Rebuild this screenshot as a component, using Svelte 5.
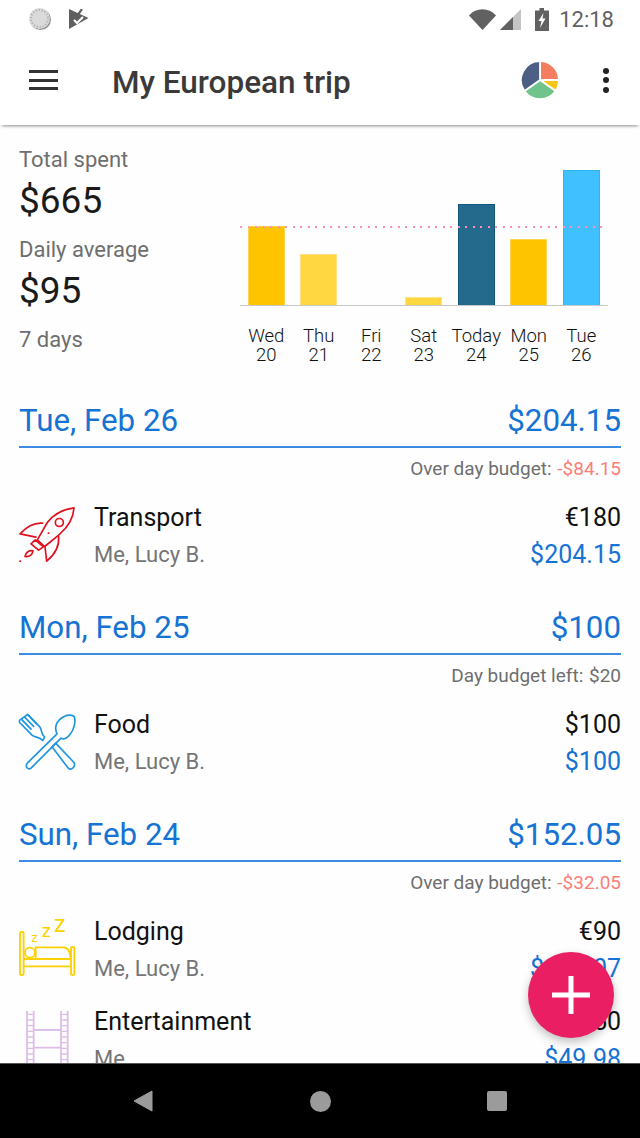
<script lang="ts">
  const bars = [
    { day: "Wed", date: 20, height: 79, tone: "amber" },
    { day: "Thu", date: 21, height: 51, tone: "yellow" },
    { day: "Fri", date: 22, height: 0, tone: "yellow" },
    { day: "Sat", date: 23, height: 8, tone: "yellow" },
    { day: "Today", date: 24, height: 101, tone: "navy" },
    { day: "Mon", date: 25, height: 66, tone: "amber" },
    { day: "Tue", date: 26, height: 135, tone: "sky" },
  ];

  const days = [
    {
      label: "Tue, Feb 26",
      total: "$204.15",
      note: "Over day budget:",
      noteValue: "-$84.15",
      over: true,
      items: [{ icon: "rocket", name: "Transport", who: "Me, Lucy B.", paid: "€180", home: "$204.15" }],
    },
    {
      label: "Mon, Feb 25",
      total: "$100",
      note: "Day budget left:",
      noteValue: "$20",
      over: false,
      items: [{ icon: "food", name: "Food", who: "Me, Lucy B.", paid: "$100", home: "$100" }],
    },
    {
      label: "Sun, Feb 24",
      total: "$152.05",
      note: "Over day budget:",
      noteValue: "-$32.05",
      over: true,
      items: [
        { icon: "bed", name: "Lodging", who: "Me, Lucy B.", paid: "€90", home: "$102.07" },
        { icon: "film", name: "Entertainment", who: "Me", paid: "€50", home: "$49.98" },
      ],
    },
  ];
</script>

{#snippet categoryIcon(kind: string)}
  {#if kind === "rocket"}
    <svg class="cat" viewBox="57 49.5 171 171" fill="none" stroke="#e0101e" stroke-width="5" stroke-linejoin="round" stroke-linecap="round" aria-hidden="true">
      <path d="M222 52C190 56 160 72 142 96L112 148L134 168L176 134C202 112 220 84 222 52Z" />
      <path d="M128 98C105 96 80 108 60 130L108 140" />
      <path d="M176 138C178 165 165 192 140 212L135 168" />
      <path d="M93 160L106 148L130 169L116 179Z" />
      <path d="M75 198C77 186 88 178 99 181C97 192 88 199 75 198Z" />
      <circle cx="178" cy="96" r="12" />
      <path d="M60 212h1M145 128h1" />
    </svg>
  {:else if kind === "food"}
    <svg class="cat" viewBox="57 40.5 171 171" fill="none" stroke="#1f95e0" stroke-width="5" stroke-linejoin="round" stroke-linecap="round" aria-hidden="true">
      <path d="M222 47C205 38 178 50 169 72C165 84 167 92 171 100L82 188C74 198 84 210 94 202L183 113C192 118 202 112 210 102C224 86 228 58 222 47Z" />
      <path d="M83 42L110 70M74 50L101 78M66 58L93 86" />
      <path d="M83 42L120 80C126 88 122 100 134 110L128 120C118 108 106 112 96 104L59 66C57 62 57 60 60 58Z" />
      <path d="M156 139L167 128L222 186C228 198 214 212 204 202Z" />
    </svg>
  {:else if kind === "bed"}
    <svg class="cat bed" viewBox="57 45 171 174" fill="none" stroke="#ffd000" stroke-width="5.5" stroke-linejoin="round" aria-hidden="true">
      <rect x="60" y="81" width="11" height="129" rx="4" />
      <rect x="213" y="126" width="10" height="84" rx="4" />
      <circle cx="90" cy="143" r="15" />
      <path d="M107 127H190C204 127 211 140 212 162H107Z" />
      <path d="M72 162H106M72 184H212" />
      <text x="94" y="110" class="zzz small">z</text>
      <text x="125" y="97" class="zzz mid">z</text>
      <text x="162" y="82" class="zzz big">z</text>
    </svg>
  {:else}
    <svg class="cat" viewBox="57 30 171 171" fill="none" stroke="#dcbfe8" stroke-width="5.5" aria-hidden="true">
      <path d="M81 30V201M101 30V201M183 30V201M203 30V201M101 87H183M101 140H183M101 193H183" />
      <path d="M81 40H101M81 57H101M81 74H101M81 91H101M81 108H101M81 125H101M81 142H101M81 159H101M81 176H101M183 40H203M183 57H203M183 74H203M183 91H203M183 108H203M183 125H203M183 142H203M183 159H203M183 176H203" stroke-width="4" />
    </svg>
  {/if}
{/snippet}

<div class="screen">
  <div class="status">
    <div class="status-left">
      <svg width="24" height="24" viewBox="0 0 24 24" aria-hidden="true">
        <circle cx="12.5" cy="12.5" r="10.5" fill="#8c8c8c" />
        <circle cx="11.5" cy="11.5" r="10.5" fill="#dadada" />
        <circle cx="11.5" cy="11.5" r="8.5" fill="none" stroke="#a8a8a8" stroke-width="2" stroke-dasharray="1 2" />
      </svg>
      <svg width="20" height="21" viewBox="0 0 20 21" aria-hidden="true">
        <path d="M0 0L19.5 9L0 20Z" fill="#5f5f5f" />
        <path d="M5 11L8 14L14 8" fill="none" stroke="#fff" stroke-width="2.2" />
        <path d="M5 5L8 7L13 0" fill="none" stroke="#5f5f5f" stroke-width="2.2" />
      </svg>
    </div>
    <div class="status-right">
      <svg width="27" height="21" viewBox="0 0 27 21" aria-hidden="true">
        <path d="M0 6.5C7 -2 20 -2 27 6.5L13.5 21Z" fill="#616161" />
      </svg>
      <svg class="signal" width="21" height="21" viewBox="0 0 21 21" aria-hidden="true">
        <path d="M0 21L21 0V21Z" fill="#c4c4c4" />
        <path d="M0 21L13 8V21Z" fill="#616161" />
      </svg>
      <svg class="battery" width="14" height="23" viewBox="0 0 14 23" aria-hidden="true">
        <path d="M4.5 0H9V2.5H14V23H0V2.5H4.5Z" fill="#616161" />
        <path d="M8.5 5L3.5 13H6.5L5 20L10.5 10.5H7.5Z" fill="#fff" />
      </svg>
      <span class="time">12:18</span>
    </div>
  </div>

  <header class="appbar">
    <button class="menu" aria-label="Menu"><span></span><span></span><span></span></button>
    <h1>My European trip</h1>
    <svg class="pie" width="40" height="40" viewBox="0 0 40 40" stroke="#fff" stroke-width="1.8" aria-hidden="true">
      <path d="M20 20V1A19 19 0 0 1 39 20Z" fill="#f47d5f" />
      <path d="M20 20H39A19 19 0 0 1 35.6 30.9Z" fill="#f5c518" />
      <path d="M20 20L35.6 30.9A19 19 0 0 1 4.4 30.9Z" fill="#70c48b" />
      <path d="M20 20L4.4 30.9A19 19 0 0 1 20 1Z" fill="#4e5f86" />
    </svg>
    <button class="more" aria-label="More"><span></span><span></span><span></span></button>
  </header>

  <main class="content">
    <section class="summary">
      <div class="totals">
        <div class="stat-label">Total spent</div>
        <div class="stat-value">$665</div>
        <div class="stat-label">Daily average</div>
        <div class="stat-value">$95</div>
        <div class="stat-label">7 days</div>
      </div>
      <div class="chart">
        <div class="plot">
          <div class="budget-line"></div>
          {#each bars as bar}
            <div class="slot">
              {#if bar.height > 0}
                <div class="bar {bar.tone}" style="height: {bar.height}px"></div>
              {/if}
            </div>
          {/each}
        </div>
        <div class="labels">
          {#each bars as bar}
            <div class="label">{bar.day}<br />{bar.date}</div>
          {/each}
        </div>
      </div>
    </section>

    {#each days as day}
      <section class="day">
        <div class="day-head">
          <span>{day.label}</span>
          <span>{day.total}</span>
        </div>
        <div class="day-note">
          {day.note}
          <span class="note-value" class:over={day.over}>{day.noteValue}</span>
        </div>
        {#each day.items as item}
          <div class="item">
            {@render categoryIcon(item.icon)}
            <div class="item-text">
              <div class="item-name">{item.name}</div>
              <div class="item-who">{item.who}</div>
            </div>
            <div class="item-amounts">
              <div class="item-paid">{item.paid}</div>
              <div class="item-home">{item.home}</div>
            </div>
          </div>
        {/each}
      </section>
    {/each}

    <button class="fab" aria-label="Add expense">
      <svg width="40" height="40" viewBox="0 0 40 40" aria-hidden="true">
        <path d="M20 1V39M1 20H39" stroke="#fff" stroke-width="5" />
      </svg>
    </button>
  </main>

  <nav class="navbar">
    <svg width="20" height="22" viewBox="0 0 20 22" aria-hidden="true">
      <path d="M19 1V21L1 11Z" fill="#9b9b9b" stroke="#9b9b9b" stroke-width="1" stroke-linejoin="round" />
    </svg>
    <span class="home"></span>
    <span class="recents"></span>
  </nav>
</div>

<style>
  :global(body) {
    margin: 0;
    background: #fff;
  }
  .screen {
    display: flex;
    flex-direction: column;
    width: 640px;
    height: 1138px;
    overflow: hidden;
    font-family: Roboto, "Liberation Sans", sans-serif;
    background: #fefefe;
  }
  .status {
    display: flex;
    justify-content: space-between;
    align-items: center;
    flex: 0 0 38px;
    padding: 0 26px 0 28px;
    background: #fff;
  }
  .status-left,
  .status-right {
    display: flex;
    align-items: center;
  }
  .status-left {
    gap: 17px;
  }
  .signal {
    margin-left: 4px;
  }
  .battery {
    margin-left: 14px;
  }
  .time {
    margin-left: 10.5px;
    font-size: 22px;
    color: #616161;
  }
  .appbar {
    position: relative;
    z-index: 2;
    display: flex;
    align-items: center;
    flex: 0 0 87px;
    box-sizing: border-box;
    padding: 0 0 3px 29px;
    background: #fff;
    box-shadow: 0 3px 3px -2px rgba(0, 0, 0, 0.45);
  }
  .appbar h1 {
    flex: 1;
    margin: 4px 0 0 54px;
    font-size: 31.5px;
    font-weight: 500;
    color: #3a3a3a;
  }
  button {
    padding: 0;
    border: 0;
    background: none;
  }
  .menu {
    display: flex;
    flex-direction: column;
    gap: 5.5px;
    width: 29px;
  }
  .menu span {
    display: block;
    height: 3px;
    background: #333;
  }
  .pie {
    margin-right: 43px;
  }
  .more {
    display: flex;
    flex-direction: column;
    gap: 3.5px;
    margin-right: 31px;
  }
  .more span {
    display: block;
    width: 6px;
    height: 6px;
    border-radius: 50%;
    background: #222;
  }
  .content {
    position: relative;
    flex: 1;
    min-height: 0;
    overflow: hidden;
    border-bottom: 1px solid #555;
  }
  .summary {
    display: flex;
    box-sizing: border-box;
    height: 270px;
    padding: 21px 0 0 19px;
  }
  .totals {
    flex: 0 0 221px;
  }
  .stat-label {
    font-size: 22px;
    line-height: 28px;
    color: #6e6e6e;
  }
  .stat-value {
    margin: 6px 0 14px;
    font-size: 37px;
    line-height: 42px;
    color: #1a1a1a;
  }
  .chart {
    width: 367.5px;
  }
  .plot {
    position: relative;
    display: flex;
    align-items: flex-end;
    height: 139px;
    margin-top: 20px;
    border-bottom: 1px solid #c8c8c8;
  }
  .budget-line {
    position: absolute;
    top: 60px;
    left: 0;
    right: 0;
    z-index: 1;
    height: 2px;
    background: repeating-linear-gradient(to right, #ff8fb8 0 2px, transparent 2px 7.5px);
  }
  .slot {
    display: flex;
    justify-content: center;
    flex: 1;
  }
  .bar {
    box-sizing: border-box;
    width: 37px;
    border: 1px solid;
    border-bottom: 0;
  }
  .amber {
    background: #ffc400;
    border-color: #ffd54f;
  }
  .yellow {
    background: #ffd740;
    border-color: #ffe082;
  }
  .navy {
    background: #236a8c;
    border-color: #12587e;
  }
  .sky {
    background: #40c0ff;
    border-color: #29b6f6;
  }
  .labels {
    display: flex;
    margin-top: 21px;
  }
  .label {
    flex: 1;
    font-size: 18.5px;
    line-height: 19px;
    font-weight: 300;
    text-align: center;
    color: #111;
  }
  .day {
    padding: 0 19px 22px;
  }
  .day-head {
    display: flex;
    justify-content: space-between;
    align-items: center;
    height: 51px;
    border-bottom: 2px solid #3d8ce4;
    font-size: 31.3px;
    color: #1573d3;
  }
  .day-note {
    height: 42px;
    padding-top: 10px;
    box-sizing: border-box;
    font-size: 19px;
    line-height: 22px;
    text-align: right;
    color: #6e6e6e;
  }
  .note-value {
    margin-left: 1px;
  }
  .over {
    color: #fb7f78;
  }
  .item {
    display: flex;
    align-items: center;
    height: 90px;
  }
  .cat {
    flex: 0 0 57px;
    width: 57px;
    height: 57px;
    overflow: visible;
  }
  .bed {
    height: 58px;
  }
  .zzz {
    fill: #ffd000;
    stroke: none;
    font-family: Roboto, sans-serif;
  }
  .zzz.small {
    font-size: 38px;
  }
  .zzz.mid {
    font-size: 55px;
  }
  .zzz.big {
    font-size: 70px;
  }
  .item-text {
    flex: 1;
    margin-left: 18px;
    padding-top: 2px;
  }
  .item-name,
  .item-paid {
    font-size: 25px;
    line-height: 28px;
    color: #111;
  }
  .item-who,
  .item-home {
    margin-top: 9px;
    font-size: 22px;
    line-height: 28px;
    color: #757575;
  }
  .item-amounts {
    padding-top: 2px;
    text-align: right;
  }
  .item-home {
    font-size: 25px;
    color: #1573d3;
  }
  .fab {
    position: absolute;
    right: 26px;
    bottom: 25px;
    z-index: 3;
    display: flex;
    align-items: center;
    justify-content: center;
    width: 86px;
    height: 86px;
    border-radius: 50%;
    background: #e91e63;
    box-shadow: 0 4px 10px rgba(0, 0, 0, 0.25);
  }
  .navbar {
    display: flex;
    align-items: center;
    flex: 0 0 74px;
    background: #000;
  }
  .navbar svg {
    margin-left: 133px;
  }
  .home {
    width: 21px;
    height: 21px;
    margin-left: 156.5px;
    border-radius: 50%;
    background: #9b9b9b;
  }
  .recents {
    width: 20px;
    height: 20px;
    margin-left: 156px;
    border-radius: 2px;
    background: #9b9b9b;
  }
</style>
